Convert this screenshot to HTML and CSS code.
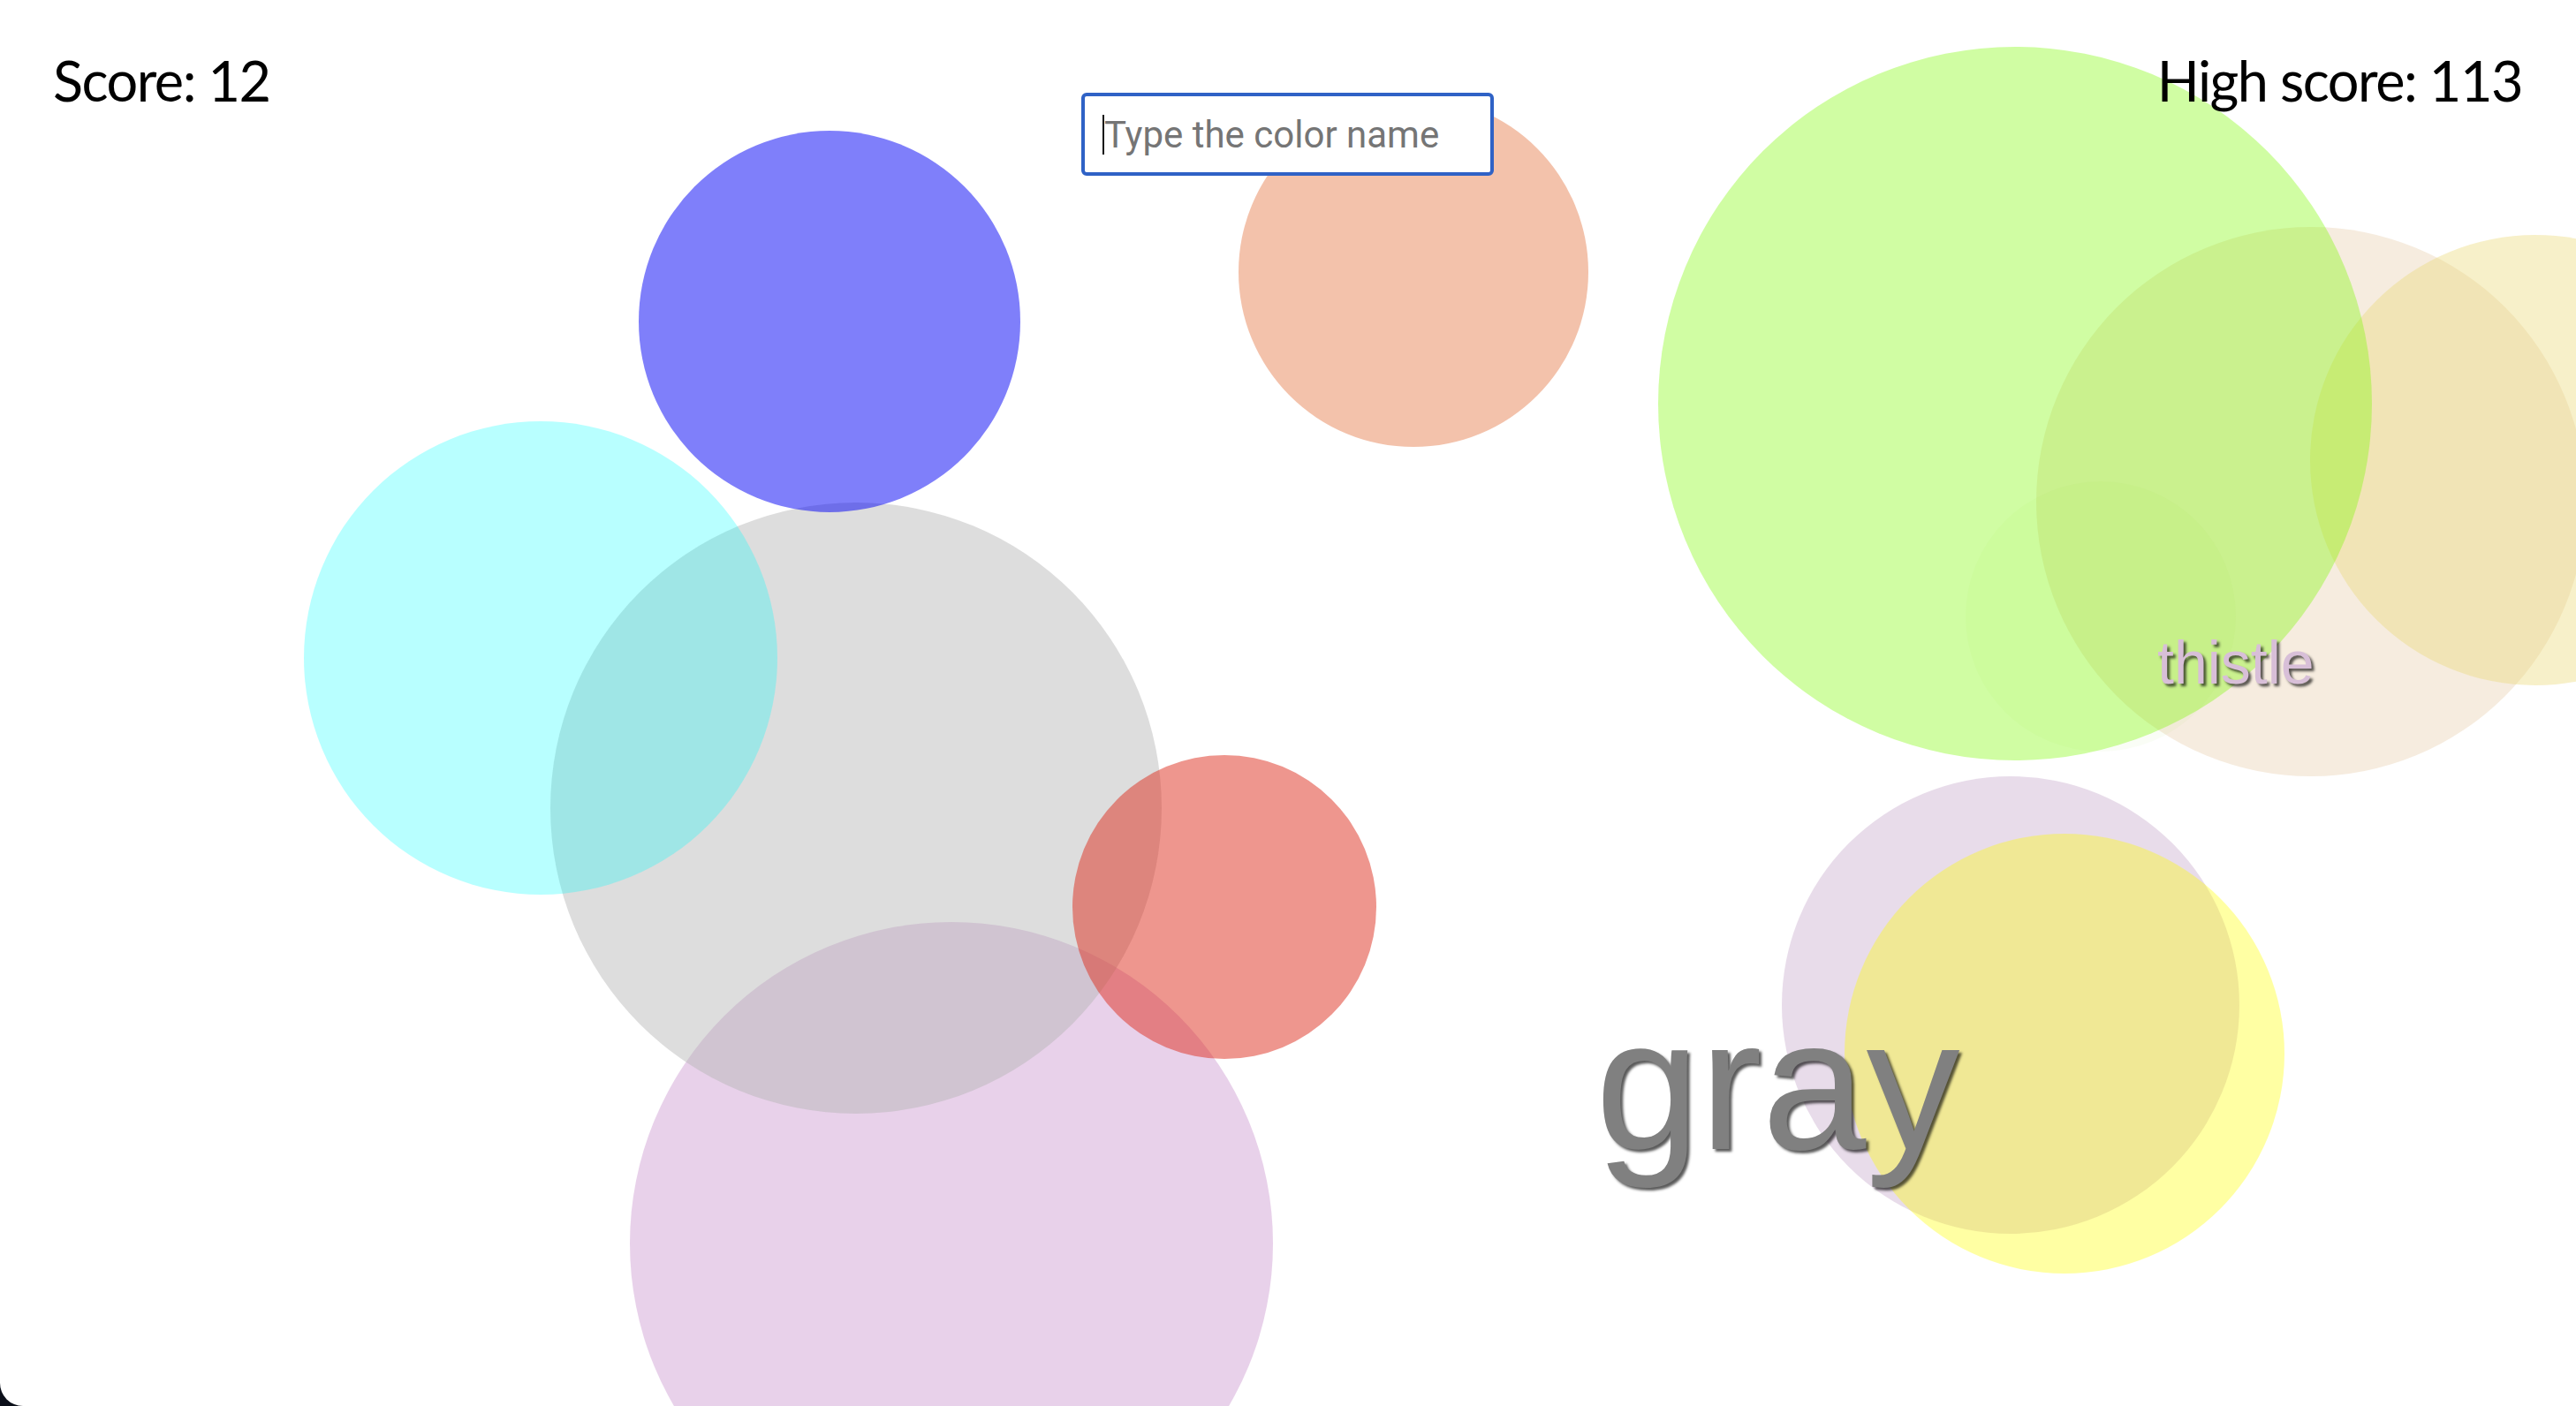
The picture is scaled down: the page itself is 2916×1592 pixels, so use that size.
FILE: index.html
```html
<!DOCTYPE html>
<html lang="en">
<head>
<meta charset="utf-8">
<title>Color game</title>
<link rel="stylesheet" href="styles.css">
</head>
<body>
<div class="screen">
  <div class="canvas">
    <div class="circle c-plum"></div>
    <div class="circle c-gray"></div>
    <div class="circle c-cyan"></div>
    <div class="circle c-blue"></div>
    <div class="circle c-peach"></div>
    <div class="circle c-red"></div>
    <div class="circle c-beige"></div>
    <div class="circle c-khaki"></div>
    <div class="circle c-faint"></div>
    <div class="circle c-green"></div>
    <div class="circle c-lavender"></div>
    <div class="circle c-yellow"></div>
    <span class="word word-thistle">thistle</span>
    <span class="word word-gray">gray</span>
  </div>
  <header class="hud">
    <div class="score">Score: 12</div>
    <div class="field">
      <input class="guess" type="text" placeholder="Type the color name">
      <span class="caret"></span>
    </div>
    <div class="score score-high">High score: 113</div>
  </header>
</div>
</body>
</html>
```
FILE: styles.css
```css
html, body {
  margin: 0;
  padding: 0;
  background: #0b0f19;
}

.screen {
  position: relative;
  width: 2916px;
  height: 1592px;
  overflow: hidden;
  background: #ffffff;
  border-bottom-left-radius: 26px;
}

.canvas {
  position: absolute;
  inset: 0;
}

.circle {
  position: absolute;
  border-radius: 50%;
}

.c-plum     { left: 713px;  top: 1044px; width: 728px; height: 728px; background: rgba(209,163,213,0.5); }
.c-gray     { left: 623px;  top: 569px;  width: 692px; height: 692px; background: rgba(180,180,180,0.45); }
.c-cyan     { left: 344px;  top: 477px;  width: 536px; height: 536px; background: rgba(0,255,255,0.28); }
.c-blue     { left: 723px;  top: 148px;  width: 432px; height: 432px; background: rgba(0,0,245,0.5); }
.c-peach    { left: 1402px; top: 110px;  width: 396px; height: 396px; background: rgba(231,133,87,0.5); }
.c-red      { left: 1214px; top: 855px;  width: 344px; height: 344px; background: rgba(222,45,30,0.5); }
.c-beige    { left: 2305px; top: 257px;  width: 622px; height: 622px; background: rgba(222,184,135,0.27); }
.c-khaki    { left: 2615px; top: 266px;  width: 510px; height: 510px; background: rgba(235,218,120,0.4); }
.c-faint    { left: 2225px; top: 545px;  width: 306px; height: 306px; background: rgba(150,220,80,0.05); }
.c-green    { left: 1877px; top: 53px;   width: 808px; height: 808px; background: rgba(124,250,0,0.36); }
.c-lavender { left: 2017px; top: 879px;  width: 518px; height: 518px; background: rgba(209,185,213,0.5); }
.c-yellow   { left: 2088px; top: 944px;  width: 498px; height: 498px; background: rgba(255,255,0,0.36); }

.word {
  position: absolute;
  font-family: "Liberation Sans", Arial, sans-serif;
  line-height: 1;
  white-space: nowrap;
  text-shadow: 3px 3px 3px rgba(0, 0, 0, 0.65);
}

.word-gray {
  left: 1806px;
  top: 1122px;
  font-size: 212px;
  color: #808080;
}

.word-thistle {
  left: 2442px;
  top: 716px;
  font-size: 68px;
  color: #d8bfd8;
}

.hud {
  position: relative;
  display: grid;
  grid-template-columns: 1fr auto 1fr;
  align-items: start;
  padding: 0 61px 0 60px;
}

.score {
  margin-top: 59px;
  font-family: Lato, "Noto Sans", sans-serif;
  font-size: 63px;
  letter-spacing: -1.5px;
  line-height: 1;
  color: #000;
  justify-self: start;
}

.score-high {
  justify-self: end;
}

.field {
  position: relative;
  margin-top: 105px;
}

.guess {
  display: block;
  box-sizing: border-box;
  width: 467px;
  height: 94px;
  margin: 0;
  padding: 0 16px 0 22px;
  border: 4px solid #2f62c6;
  border-radius: 6px;
  background: #fff;
  outline: none;
  font-family: Roboto, "Open Sans", sans-serif;
  font-size: 42px;
  color: #222;
}

.guess::placeholder {
  color: #757575;
  opacity: 1;
}

.caret {
  position: absolute;
  left: 24px;
  top: 25px;
  width: 2px;
  height: 45px;
  background: #111;
}
```
